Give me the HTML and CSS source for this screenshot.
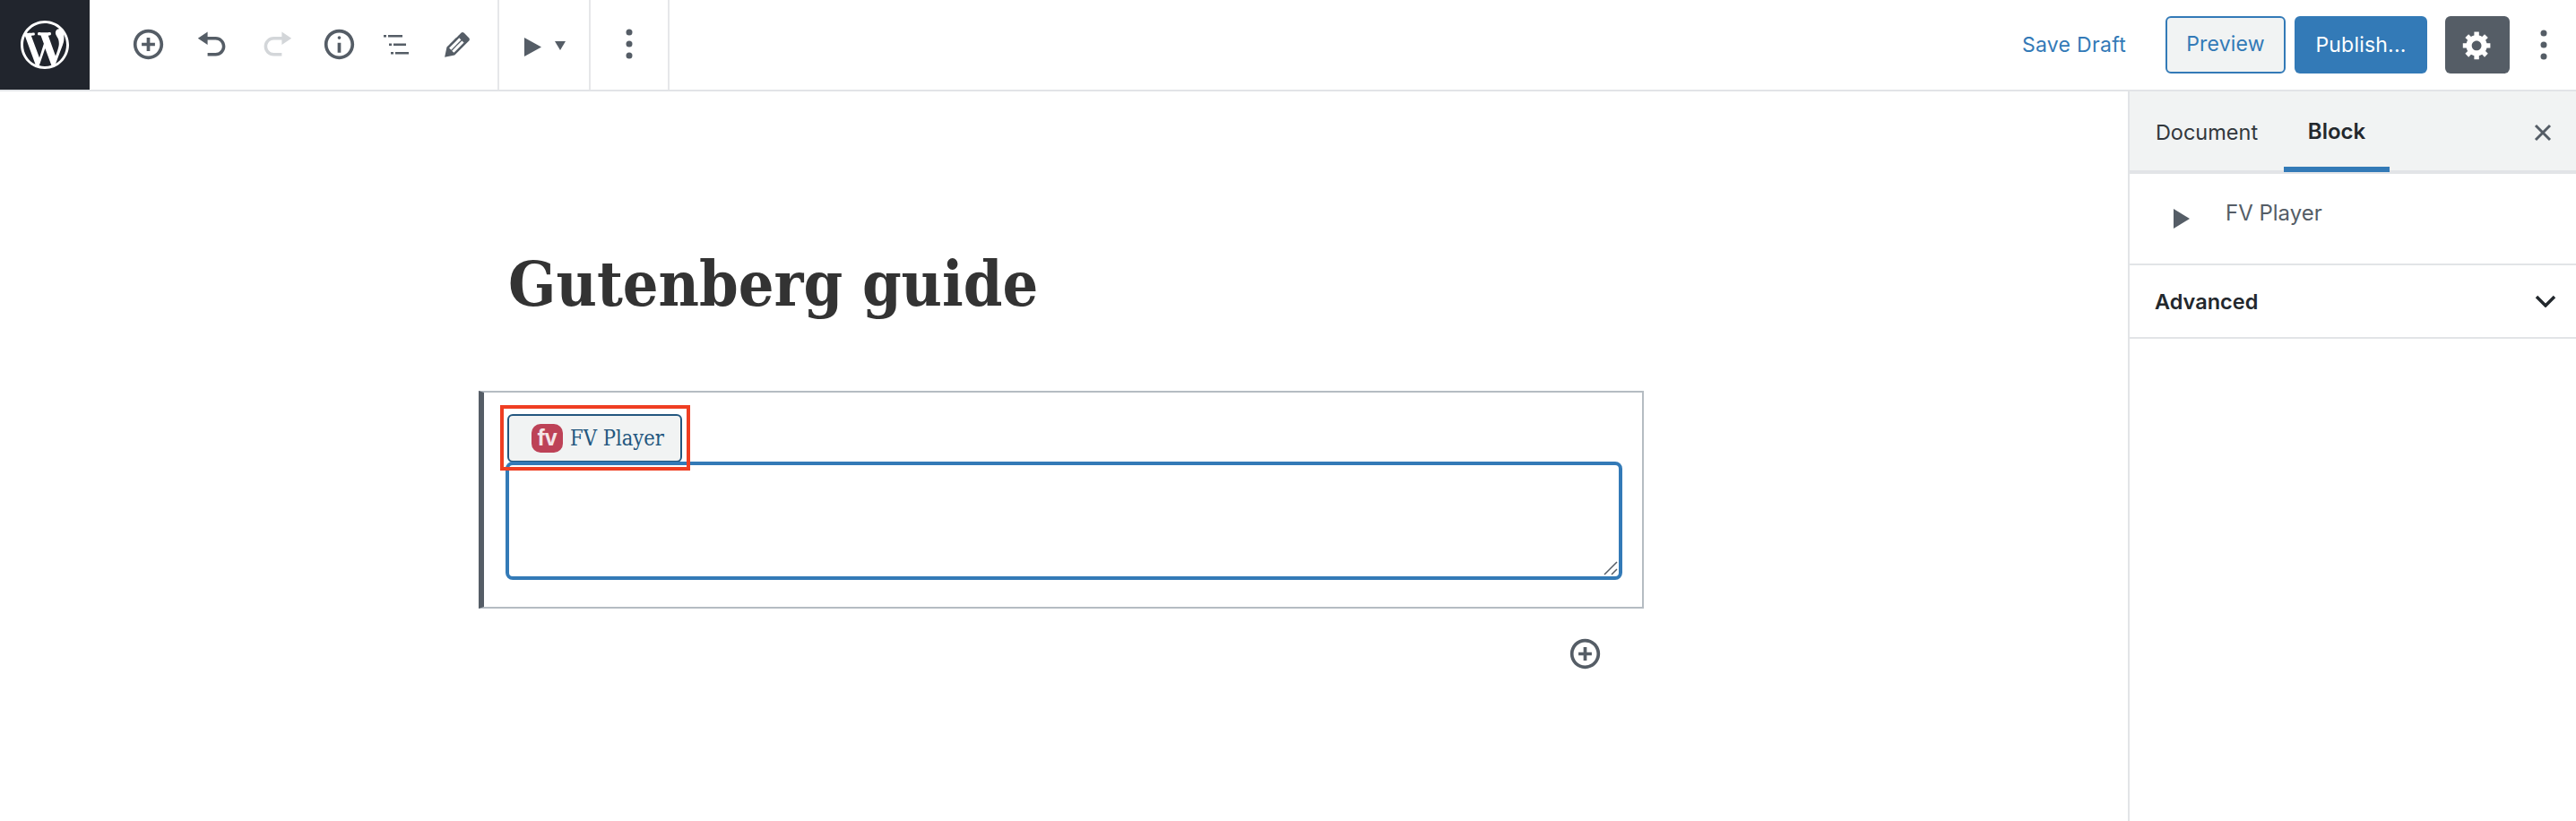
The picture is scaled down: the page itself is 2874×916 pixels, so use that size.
FILE: index.html
```html
<!DOCTYPE html>
<html lang="en">
<head>
    <meta charset="UTF-8">
    <title>Gutenberg guide</title>
    <link rel="stylesheet" href="styles.css">
</head>
<body>
    <header class="topbar">
        <div class="logo">
            <svg width="54" height="54" viewBox="0 0 20 20"><path fill="#fff" d="M20 10c0-5.51-4.49-10-10-10C4.48 0 0 4.49 0 10c0 5.52 4.48 10 10 10 5.51 0 10-4.48 10-10zM7.78 15.37L4.37 6.22c.55-.02 1.17-.08 1.17-.08.5-.06.44-1.13-.06-1.11 0 0-1.45.11-2.37.11-.18 0-.37 0-.58-.01C4.12 2.69 6.87 1.11 10 1.11c2.33 0 4.45.87 6.05 2.34-.68-.11-1.65.39-1.65 1.58 0 .74.45 1.36.9 2.1.35.61.55 1.36.55 2.46 0 1.49-1.4 5-1.4 5l-3.03-8.37c.54-.02.82-.17.82-.17.5-.05.44-1.25-.06-1.22 0 0-1.44.12-2.38.12-.87 0-2.33-.12-2.33-.12-.5-.03-.56 1.2-.06 1.22l.92.08 1.26 3.41zM17.41 10c.24-.64.74-1.87.43-4.25.7 1.29 1.05 2.71 1.05 4.25 0 3.29-1.73 6.24-4.4 7.78.97-2.59 1.94-5.2 2.92-7.78zM6.1 18.09C3.12 16.65 1.11 13.53 1.11 10c0-1.3.23-2.48.72-3.59C3.25 10.3 4.67 14.2 6.1 18.09zm4.03-6.63l2.58 6.98c-.86.29-1.76.45-2.71.45-.79 0-1.57-.11-2.29-.33.81-2.38 1.62-4.74 2.42-7.1z"/></svg>
        </div>

        <div class="tools">
            <span class="tool wide"><svg width="37" height="37" viewBox="0 0 20 20"><path d="M10 1c-5 0-9 4-9 9s4 9 9 9 9-4 9-9-4-9-9-9zm0 16c-3.9 0-7-3.1-7-7s3.1-7 7-7 7 3.1 7 7-3.1 7-7 7zm1-11H9v3H6v2h3v3h2v-3h3V9h-3V6z"/></svg></span>
            <span class="tool wide"><svg width="36" height="36" viewBox="0 0 20 20"><path d="M12 5H7V2L1 6l6 4V7h5c2.2 0 4 1.8 4 4s-1.8 4-4 4H7v2h5c3.3 0 6-2.7 6-6s-2.7-6-6-6z"/></svg></span>
            <span class="tool wide disabled"><svg width="36" height="36" viewBox="0 0 20 20"><path d="M8 5h5V2l6 4-6 4V7H8c-2.2 0-4 1.8-4 4s1.8 4 4 4h5v2H8c-3.3 0-6-2.7-6-6s2.7-6 6-6z"/></svg></span>
            <span class="tool"><svg width="37" height="37" viewBox="0 0 20 20"><path d="M9 15h2V9H9v6zm1-10c-.5 0-1 .5-1 1s.5 1 1 1 1-.5 1-1-.5-1-1-1zm0-4c-5 0-9 4-9 9s4 9 9 9 9-4 9-9-4-9-9-9zm0 16c-3.9 0-7-3.1-7-7s3.1-7 7-7 7 3.1 7 7-3.1 7-7 7z"/></svg></span>
            <span class="tool list-tool"><svg width="28" height="24" viewBox="0 0 28 24"><path d="M0 1h3v2.500H0zM5 1h16v2.500H5zM6 10.500h3V13H6zM11 10.500h14V13H11zM8 20h3v2.500H8zM13 20h15v2.500H13z"/></svg></span>
            <span class="tool"><svg width="40" height="40" viewBox="0 0 20 20"><path d="M13.89 3.39l2.71 2.72c.46.46.42 1.24.03 1.64l-8.01 8.02-5.56 1.16 1.16-5.58s7.6-7.63 7.99-8.03c.39-.39 1.22-.39 1.68.07zm-2.73 2.79l-5.59 5.61 1.11 1.11 5.54-5.65zm-2.97 8.23l5.58-5.6-1.07-1.08-5.59 5.6z"/></svg></span>
        </div>

        <div class="block-switcher">
            <svg width="19" height="21" viewBox="0 0 19 21"><path d="M0 0l19 10.500L0 21z"/></svg>
            <svg class="caret" width="12" height="10" viewBox="0 0 12 10"><path d="M0 0h12L6 10z"/></svg>
        </div>

        <div class="more-cell">
            <svg width="8" height="34" viewBox="0 0 8 34"><circle cx="4" cy="4" r="3.500"/><circle cx="4" cy="17" r="3.500"/><circle cx="4" cy="30" r="3.500"/></svg>
        </div>

        <div class="actions">
            <a class="save-draft">Save Draft</a>
            <a class="btn btn-preview">Preview</a>
            <a class="btn btn-publish">Publish...</a>
            <a class="btn btn-settings">
                <svg width="36" height="36" viewBox="0 0 20 20"><path fill="#fff" d="M18 12h-2.180c-.17.7-.44 1.350-.81 1.930l1.540 1.540-2.100 2.100-1.540-1.540c-.58.36-1.230.63-1.910.79V19H8v-2.180c-.68-.16-1.330-.43-1.910-.79l-1.540 1.540-2.120-2.120 1.540-1.540c-.36-.58-.63-1.230-.79-1.910H1V9.030h2.170c.16-.7.44-1.350.8-1.940L2.430 5.550l2.100-2.100 1.540 1.540c.58-.37 1.240-.64 1.930-.81V2h3v2.180c.68.16 1.330.43 1.910.79l1.540-1.540 2.120 2.120-1.540 1.540c.36.59.64 1.240.8 1.940H18V12zm-8.500 1.500c1.660 0 3-1.340 3-3s-1.340-3-3-3-3 1.340-3 3 1.340 3 3 3z"/></svg>
            </a>
            <svg class="more-right" width="8" height="34" viewBox="0 0 8 34"><circle cx="4" cy="4" r="3.500"/><circle cx="4" cy="17" r="3.500"/><circle cx="4" cy="30" r="3.500"/></svg>
        </div>
    </header>

    <div class="layout">
        <main class="editor">
            <h1 class="post-title">Gutenberg guide</h1>

            <section class="fv-block">
                <div class="media-wrap">
                    <button class="media-btn">
                        <span class="fv-logo">fv</span>
                        FV Player
                    </button>
                    <span class="highlight"></span>
                </div>
                <div class="shortcode-wrap">
                    <textarea class="shortcode"></textarea>
                    <svg class="resize-grip" width="16" height="16" viewBox="0 0 16 16"><path d="M1 15L15 1M9 15l6-6"/></svg>
                </div>
            </section>

            <div class="inserter">
                <svg width="37" height="37" viewBox="0 0 20 20"><path d="M10 1c-5 0-9 4-9 9s4 9 9 9 9-4 9-9-4-9-9-9zm0 16c-3.900 0-7-3.100-7-7s3.100-7 7-7 7 3.100 7 7-3.100 7-7 7zm1-11H9v3H6v2h3v3h2v-3h3V9h-3V6z"/></svg>
            </div>
        </main>

        <aside class="sidebar">
            <div class="tabs">
                <span class="tab">Document</span>
                <span class="tab active">Block</span>
                <svg class="close" width="20" height="20" viewBox="0 0 20 20"><path d="M2 2l16 16M18 2L2 18"/></svg>
            </div>
            <div class="block-card">
                <svg width="18" height="22" viewBox="0 0 18 22"><path d="M0 0l18 11L0 22z"/></svg>
                <span class="block-name">FV Player</span>
            </div>
            <div class="panel-row">
                <span>Advanced</span>
                <svg width="24" height="14" viewBox="0 0 24 14"><path d="M2 2l10 10L22 2"/></svg>
            </div>
        </aside>
    </div>
</body>
</html>
```

FILE: styles.css
```css
* {
    box-sizing: border-box;
}
html, body {
    height: 100%;
}
body {
    margin: 0;
    display: flex;
    flex-direction: column;
    background: #fff;
    font-family: Inter, "Noto Sans", sans-serif;
    overflow: hidden;
}
svg {
    fill: #555d66;
    display: block;
}

/* top bar */
.topbar {
    display: flex;
    align-items: stretch;
    height: 102px;
    flex: none;
    border-bottom: 2px solid #e2e4e7;
}
.logo {
    width: 100px;
    background: #21252d;
    display: flex;
    align-items: center;
    justify-content: center;
}
.tools {
    display: flex;
    align-items: center;
    width: 455px;
    padding-left: 29px;
    padding-bottom: 1px;
}
.tool {
    width: 66px;
    display: flex;
    justify-content: center;
}
.tool.wide {
    width: 72px;
}
.tool.disabled svg {
    fill: #d3d6d9;
}
.list-tool {
    padding-right: 4px;
}
.block-switcher {
    width: 102px;
    border-left: 2px solid #e6e7e9;
    display: flex;
    align-items: flex-start;
    padding: 42px 0 0 28px;
}
.caret {
    margin: 4px 0 0 15px;
}
.more-cell {
    width: 90px;
    border-left: 2px solid #e6e7e9;
    border-right: 2px solid #e6e7e9;
    display: flex;
    justify-content: center;
    align-items: center;
    padding-bottom: 2px;
}
.actions {
    margin-left: auto;
    display: flex;
    align-items: center;
    padding-right: 32px;
}
.save-draft {
    font-size: 23px;
    letter-spacing: 0.3px;
    color: #337ab7;
    margin-right: 44px;
}
.btn {
    height: 64px;
    border-radius: 6px;
    font-size: 23px;
    letter-spacing: 0.2px;
    display: flex;
    align-items: center;
    justify-content: center;
}
.btn-preview {
    width: 134px;
    color: #337ab7;
    background: #f1f3f3;
    border: 2px solid #337ab7;
    margin-right: 10px;
    padding-bottom: 3px;
}
.btn-publish {
    width: 148px;
    color: #fff;
    background: #337ab7;
    margin-right: 20px;
}
.btn-settings {
    width: 72px;
    background: #555d66;
    margin-right: 34px;
}

/* main area */
.layout {
    flex: 1;
    display: flex;
    min-height: 0;
}
.editor {
    flex: 1;
    padding-left: 534px;
}
.post-title {
    margin: 0;
    padding: 165px 0 0 33px;
    height: 334px;
    font-family: "DejaVu Serif Condensed", "DejaVu Serif", serif;
    font-weight: bold;
    font-size: 69.500px;
    line-height: 100px;
    color: #333;
}
.fv-block {
    width: 1300px;
    height: 243px;
    border: 2px solid #b5bcc2;
    border-left: 6px solid #555d66;
    padding: 24px 0 0 26px;
}
.media-wrap {
    position: relative;
    width: 195px;
    height: 53px;
}
.media-btn {
    width: 195px;
    height: 54px;
    padding: 0 0 0 25px;
    display: flex;
    align-items: center;
    gap: 8px;
    background: #f1f3f3;
    border: 2px solid #23577f;
    border-radius: 6px;
    color: #23577f;
    font-family: "DejaVu Serif Condensed", "DejaVu Serif", serif;
    font-size: 23.500px;
}
.fv-logo {
    width: 35px;
    height: 32px;
    border-radius: 10px;
    background: #bd4257;
    color: #f4e6e8;
    font-family: "Liberation Sans", sans-serif;
    font-size: 25px;
    font-weight: bold;
    line-height: 30px;
    text-align: center;
}
.highlight {
    position: absolute;
    top: -10px;
    left: -8px;
    width: 212px;
    height: 73px;
    border: 4px solid #ef3e22;
    z-index: 2;
}
.shortcode-wrap {
    position: relative;
    width: 1246px;
    height: 132px;
    margin-left: -2px;
}
.shortcode {
    display: block;
    width: 100%;
    height: 100%;
    border: 4px solid #337ab7;
    border-radius: 8px;
    background: #fff;
    outline: none;
    resize: none;
}
.resize-grip {
    position: absolute;
    right: 5px;
    bottom: 5px;
    fill: none;
    stroke: #555d66;
    stroke-width: 1.500;
}
.inserter {
    width: 1253px;
    padding-top: 32px;
    display: flex;
    justify-content: flex-end;
}

/* sidebar */
.sidebar {
    width: 500px;
    flex: none;
    border-left: 2px solid #e2e4e7;
}
.tabs {
    height: 92px;
    display: flex;
    background: #f1f3f3;
    border-bottom: 4px solid #e2e4e7;
    position: relative;
    font-size: 24px;
    color: #32373c;
}
.tab {
    width: 118px;
    height: 90px;
    display: flex;
    align-items: center;
    justify-content: center;
}
.tab:first-child {
    width: 172px;
    font-size: 23.500px;
}
.tab.active {
    font-weight: 600;
    color: #23282d;
    border-bottom: 6px solid #337ab7;
    padding-top: 4px;
}
.close {
    position: absolute;
    right: 27px;
    top: 36px;
    fill: none;
    stroke: #555d66;
    stroke-width: 3;
}
.block-card {
    height: 102px;
    border-bottom: 2px solid #e2e4e7;
    display: flex;
    padding: 39px 0 0 49px;
    align-items: flex-start;
}
.block-name {
    margin: -10px 0 0 40px;
    font-size: 24px;
    color: #555d66;
}
.panel-row {
    height: 82px;
    border-bottom: 2px solid #e2e4e7;
    display: flex;
    align-items: center;
    justify-content: space-between;
    padding: 0 22px 0 28px;
    font-size: 23.500px;
    font-weight: 600;
    color: #23282d;
}
.panel-row svg {
    fill: none;
    stroke: #23282d;
    stroke-width: 3.500;
}
```
